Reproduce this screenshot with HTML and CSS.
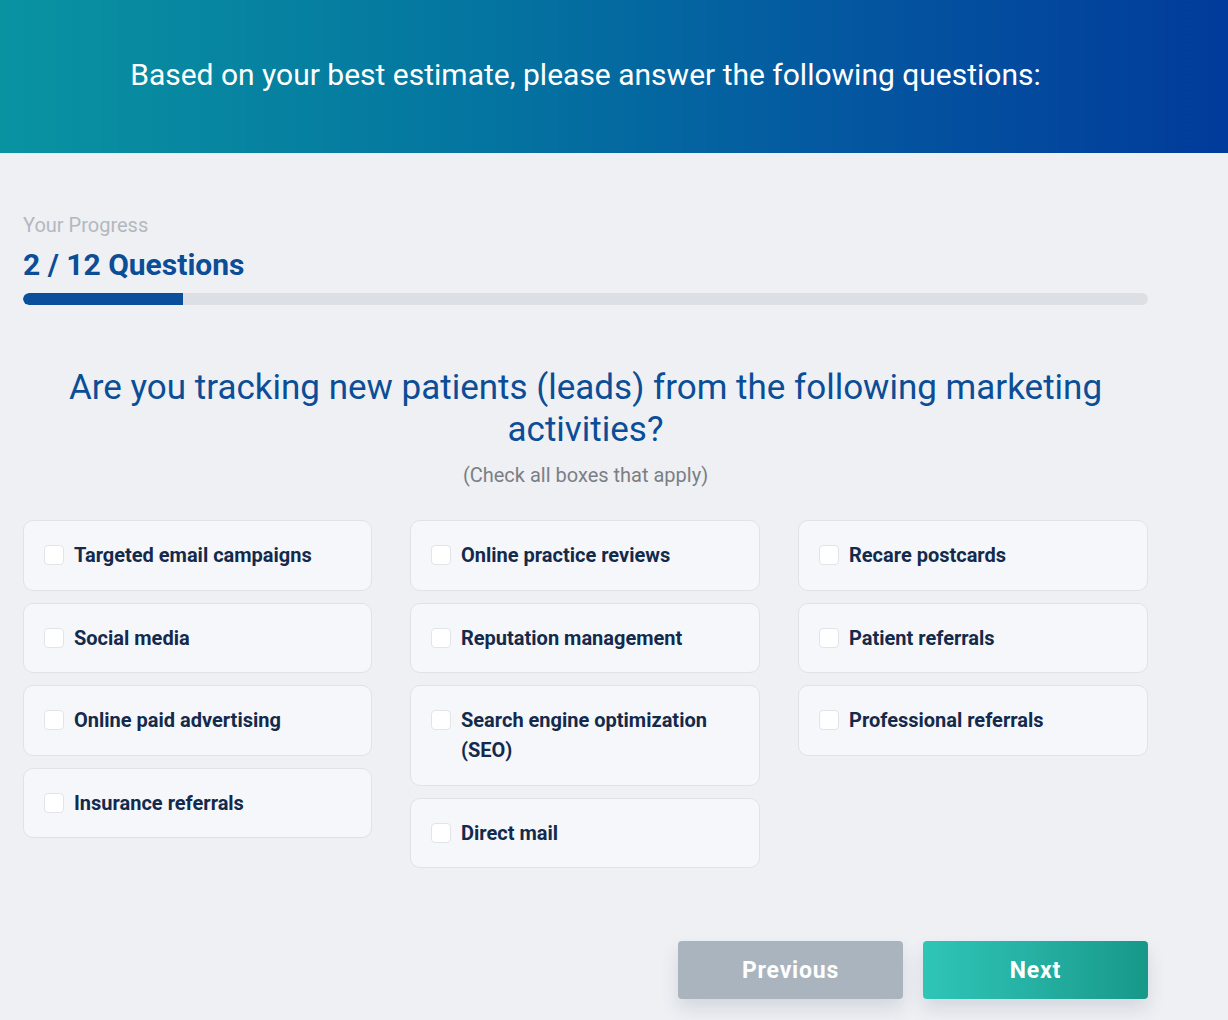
FILE: index.html
```html
<!DOCTYPE html>
<html lang="en">
<head>
<meta charset="utf-8">
<title>Survey</title>
<link rel="stylesheet" href="styles.css">
</head>
<body>
<header class="hero">
  <div class="wrap">
    <h1 class="hero-title">Based on your best estimate, please answer the following questions:</h1>
  </div>
</header>
<main class="wrap main">
  <section class="progress">
    <div class="progress-label">Your Progress</div>
    <div class="progress-count">2 / 12 Questions</div>
    <div class="track"><div class="fill"></div></div>
  </section>
  <section class="question">
    <h2 class="q-title">Are you tracking new patients (leads) from the following marketing activities?</h2>
    <p class="q-sub">(Check all boxes that apply)</p>
  </section>
  <section class="options">
    <div class="col">
      <label class="opt"><span class="box"></span><span class="opt-text">Targeted email campaigns</span></label>
      <label class="opt"><span class="box"></span><span class="opt-text">Social media</span></label>
      <label class="opt"><span class="box"></span><span class="opt-text">Online paid advertising</span></label>
      <label class="opt"><span class="box"></span><span class="opt-text">Insurance referrals</span></label>
    </div>
    <div class="col">
      <label class="opt"><span class="box"></span><span class="opt-text">Online practice reviews</span></label>
      <label class="opt"><span class="box"></span><span class="opt-text">Reputation management</span></label>
      <label class="opt"><span class="box"></span><span class="opt-text">Search engine optimization (SEO)</span></label>
      <label class="opt"><span class="box"></span><span class="opt-text">Direct mail</span></label>
    </div>
    <div class="col">
      <label class="opt"><span class="box"></span><span class="opt-text">Recare postcards</span></label>
      <label class="opt"><span class="box"></span><span class="opt-text">Patient referrals</span></label>
      <label class="opt"><span class="box"></span><span class="opt-text">Professional referrals</span></label>
    </div>
  </section>
  <nav class="actions">
    <button class="btn btn-prev">Previous</button>
    <button class="btn btn-next">Next</button>
  </nav>
</main>
</body>
</html>
```
FILE: styles.css
```css
* { box-sizing: border-box; }
html, body { margin: 0; padding: 0; }
body {
  background: #eef0f4;
  font-family: Roboto, "Liberation Sans", Arial, sans-serif;
  min-height: 1020px;
}
.wrap {
  width: 1125px;
  margin-left: 23px;
}
.hero {
  height: 153px;
  background: linear-gradient(90deg, #0993a1 0%, #0474a0 40%, #0456a0 70%, #013b9b 100%);
  display: flex;
  align-items: center;
}
.hero-title {
  margin: 0;
  text-align: center;
  color: #fff;
  font-weight: 400;
  font-size: 30px;
  line-height: 1.2;
  padding-bottom: 4px;
}
.main { padding-top: 60px; }
.progress-label {
  color: #b3b8be;
  font-size: 20px;
  line-height: 24px;
}
.progress-count {
  color: #0b4d96;
  font-weight: 700;
  font-size: 30px;
  line-height: 36px;
  margin-top: 10px;
}
.track {
  margin-top: 10px;
  height: 12px;
  border-radius: 6px;
  background: #dcdfe3;
  overflow: hidden;
}
.fill {
  width: 160px;
  height: 100%;
  background: #0a4f9c;
  border-radius: 6px 0 0 6px;
}
.question { text-align: center; margin-top: 62px; }
.q-title {
  margin: 0 auto;
  max-width: 1060px;
  color: #0b4d96;
  font-weight: 400;
  font-size: 35px;
  line-height: 42px;
}
.q-sub {
  margin: 12px 0 0;
  color: #7b7f84;
  font-size: 20px;
  line-height: 24px;
}
.options {
  margin-top: 33px;
  display: grid;
  grid-template-columns: 349px 350px 350px;
  column-gap: 38px;
  align-items: start;
}
.col {
  display: flex;
  flex-direction: column;
  gap: 12px;
}
.opt {
  display: flex;
  align-items: flex-start;
  gap: 10px;
  padding: 19.3px 20px;
  background: #f6f7fa;
  border: 1px solid #dfe2e7;
  border-radius: 10px;
  cursor: pointer;
}
.box {
  flex: none;
  width: 20px;
  height: 20px;
  margin-top: 5px;
  background: #fff;
  border: 1px solid #e1e4e8;
  border-radius: 4px;
}
.opt-text {
  color: #132a4c;
  font-weight: 700;
  font-size: 20px;
  line-height: 30px;
}
.actions {
  margin-top: 73px;
  display: flex;
  justify-content: flex-end;
  gap: 20px;
}
.btn {
  width: 225px;
  height: 58px;
  border: 0;
  border-radius: 4px;
  color: #fff;
  font-family: Roboto, "Liberation Sans", Arial, sans-serif;
  font-weight: 700;
  font-size: 23px;
  letter-spacing: 0.8px;
  box-shadow: 0 10px 18px rgba(60, 70, 90, 0.14);
  cursor: pointer;
}
.btn-prev { background: #aab4be; }
.btn-next { background: linear-gradient(90deg, #2ec5b7 0%, #25b0a2 50%, #179889 100%); }
```
